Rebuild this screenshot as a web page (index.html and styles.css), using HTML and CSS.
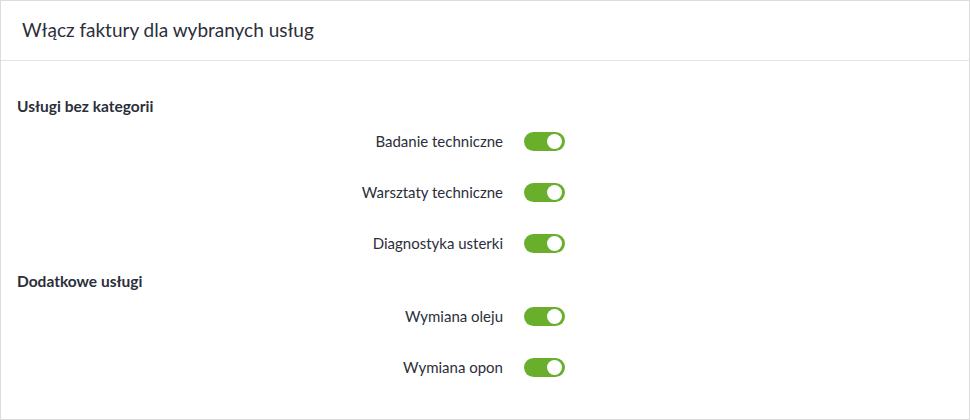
FILE: index.html
```html
<!DOCTYPE html>
<html lang="pl">
<head>
    <meta charset="UTF-8">
    <meta name="viewport" content="width=device-width, initial-scale=1.0">
    <title>Faktury dla usług</title>
    <link rel="stylesheet" href="styles.css">
</head>
<body>
    <div class="panel">
        <div class="panel-header">
            <h2>Włącz faktury dla wybranych usług</h2>
        </div>
        <div class="panel-body">
            <div class="group">
                <h3>Usługi bez kategorii</h3>
                <div class="row">
                    <span class="row-label">Badanie techniczne</span>
                    <label class="switch"><input type="checkbox" checked><span class="slider"></span></label>
                </div>
                <div class="row">
                    <span class="row-label">Warsztaty techniczne</span>
                    <label class="switch"><input type="checkbox" checked><span class="slider"></span></label>
                </div>
                <div class="row">
                    <span class="row-label">Diagnostyka usterki</span>
                    <label class="switch"><input type="checkbox" checked><span class="slider"></span></label>
                </div>
            </div>
            <div class="group">
                <h3>Dodatkowe usługi</h3>
                <div class="row">
                    <span class="row-label">Wymiana oleju</span>
                    <label class="switch"><input type="checkbox" checked><span class="slider"></span></label>
                </div>
                <div class="row">
                    <span class="row-label">Wymiana opon</span>
                    <label class="switch"><input type="checkbox" checked><span class="slider"></span></label>
                </div>
            </div>
        </div>
    </div>
</body>
</html>
```

FILE: styles.css
```css
body {
    margin: 0;
    font-family: 'Lato', 'Noto Sans', sans-serif;
    color: #2b2f3a;
    background: white;
}
.panel {
    height: 420px;
    box-sizing: border-box;
    border: 1px solid #dcdcdc;
    background: white;
}
.panel-header {
    height: 59px;
    border-bottom: 1px solid #e3e3e3;
    display: flex;
    align-items: center;
    padding: 0 21px;
}
.panel-header h2 {
    margin: 0;
    font-size: 19px;
    font-weight: 400;
    padding-bottom: 3px;
}
.panel-body {
    padding: 35px 16px 0;
}
.group + .group {
    margin-top: 2px;
}
.group h3 {
    margin: 0;
    height: 20px;
    line-height: 20px;
    font-size: 15.5px;
    font-weight: 700;
}
.row {
    height: 51px;
    display: grid;
    grid-template-columns: 486px auto;
    column-gap: 21px;
    align-items: center;
}
.row-label {
    text-align: right;
    font-size: 15px;
    padding-bottom: 1px;
}
.switch {
    position: relative;
    display: inline-block;
    width: 41px;
    height: 19px;
}
.switch input {
    display: none;
}
.slider {
    position: absolute;
    inset: 0;
    background-color: #6aaf2c;
    border-radius: 10px;
    cursor: pointer;
}
.slider:before {
    content: '';
    position: absolute;
    width: 15px;
    height: 15px;
    top: 2px;
    right: 3px;
    background: white;
    border-radius: 50%;
}
```
